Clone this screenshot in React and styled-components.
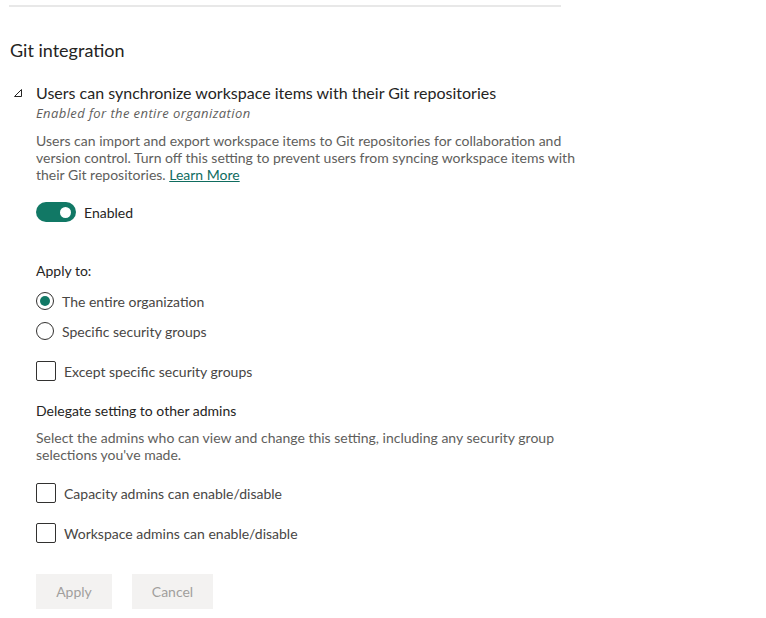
import React, { useState } from 'react';
import styled, { createGlobalStyle } from 'styled-components';

const GlobalStyle = createGlobalStyle`
  body {
    margin: 0;
    background: #fff;
    font-family: 'Segoe UI', Lato, 'Open Sans', sans-serif;
    color: #252423;
  }
`;

const Page = styled.div`
  padding: 5px 0 0 9px;
  width: 600px;
`;

const Divider = styled.div`
  width: 552px;
  height: 2px;
  background: #e8e8e8;
`;

const Heading = styled.h2`
  margin: 31px 0 0 1px;
  font-size: 18px;
  font-weight: 400;
  line-height: 24px;
  color: #252423;
`;

const Setting = styled.div`
  display: flex;
  margin-top: 20px;
`;

const Caret = styled.div`
  width: 27px;
  padding: 6px 0 0 4px;
  box-sizing: border-box;

  svg {
    display: block;
  }
`;

const Body = styled.div`
  flex: 1;
  display: flex;
  flex-direction: column;
  align-items: flex-start;
`;

const Title = styled.div`
  font-size: 16px;
  line-height: 22px;
`;

const Subtitle = styled.div`
  font-family: 'Open Sans', sans-serif;
  font-size: 13px;
  font-style: italic;
  letter-spacing: 0.4px;
  line-height: 18px;
  color: #605e5c;
`;

const Description = styled.p`
  margin: ${(p) => p.$top || 0}px 0 0;
  width: 560px;
  font-size: 14px;
  line-height: 17px;
  color: #605e5c;
`;

const LearnMore = styled.a`
  color: #0f6c5f;
  text-decoration: underline;
`;

const ToggleRow = styled.label`
  display: flex;
  align-items: center;
  gap: 8px;
  margin-top: 19px;
  font-size: 14px;
  cursor: pointer;
`;

const Track = styled.span`
  position: relative;
  width: 40px;
  height: 20px;
  border-radius: 10px;
  background: ${(p) => (p.$on ? '#117865' : '#fff')};
  border: ${(p) => (p.$on ? 'none' : '1px solid #605e5c')};
  box-sizing: border-box;
`;

const Knob = styled.span`
  position: absolute;
  top: 5px;
  left: ${(p) => (p.$on ? '24px' : '5px')};
  width: 11px;
  height: 11px;
  border-radius: 50%;
  background: ${(p) => (p.$on ? '#fff' : '#605e5c')};
`;

const Label = styled.div`
  margin-top: ${(p) => p.$top}px;
  font-size: 14px;
  line-height: 20px;
  color: #252423;
`;

const OptionRow = styled.label`
  display: flex;
  align-items: center;
  gap: 8px;
  height: 20px;
  margin-top: ${(p) => p.$top}px;
  font-size: 14px;
  color: #484644;
  cursor: pointer;
`;

const Radio = styled.span`
  display: flex;
  align-items: center;
  justify-content: center;
  width: 18px;
  height: 18px;
  border-radius: 50%;
  border: 1px solid #323130;
  box-sizing: border-box;
  &::after {
    content: '';
    width: 10px;
    height: 10px;
    border-radius: 50%;
    background: ${(p) => (p.$checked ? '#117865' : 'transparent')};
  }
`;

const Checkbox = styled.span`
  width: 20px;
  height: 20px;
  border: 1px solid #323130;
  border-radius: 2px;
  box-sizing: border-box;
  background: ${(p) => (p.$checked ? '#117865' : '#fff')};
`;

const Buttons = styled.div`
  display: flex;
  gap: 20px;
  margin-top: 31px;
`;

const Button = styled.button`
  width: ${(p) => p.$w}px;
  height: 35px;
  border: none;
  background: #f3f2f1;
  color: #a19f9d;
  font-family: inherit;
  font-size: 14px;
  padding: 0;
`;

function CaretIcon() {
  return (
    <svg width='10' height='10' viewBox='0 0 10 10'>
      <path d='M8.5 1.5 L8.5 8.5 L1.5 8.5 Z' fill='none' stroke='#252423' strokeWidth='1' />
    </svg>
  );
}

export default function App() {
  const [enabled, setEnabled] = useState(true);
  const [scope, setScope] = useState('org');
  const [checks, setChecks] = useState({ except: false, capacity: false, workspace: false });

  const flip = (key) => setChecks((c) => ({ ...c, [key]: !c[key] }));

  return (
    <Page>
      <GlobalStyle />
      <Divider />
      <Heading>Git integration</Heading>
      <Setting>
        <Caret>
          <CaretIcon />
        </Caret>
        <Body>
          <Title>Users can synchronize workspace items with their Git repositories</Title>
          <Subtitle>Enabled for the entire organization</Subtitle>
          <Description $top={10}>
            Users can import and export workspace items to Git repositories for collaboration and
            version control. Turn off this setting to prevent users from syncing workspace items with
            their Git repositories. <LearnMore href='#'>Learn More</LearnMore>
          </Description>

          <ToggleRow onClick={() => setEnabled(!enabled)}>
            <Track $on={enabled}>
              <Knob $on={enabled} />
            </Track>
            {enabled ? 'Enabled' : 'Disabled'}
          </ToggleRow>

          <Label $top={39}>Apply to:</Label>
          <OptionRow $top={10} onClick={() => setScope('org')}>
            <Radio $checked={scope === 'org'} />
            The entire organization
          </OptionRow>
          <OptionRow $top={10} onClick={() => setScope('groups')}>
            <Radio $checked={scope === 'groups'} />
            Specific security groups
          </OptionRow>
          <OptionRow $top={20} onClick={() => flip('except')}>
            <Checkbox $checked={checks.except} />
            Except specific security groups
          </OptionRow>

          <Label $top={20}>Delegate setting to other admins</Label>
          <Description $top={8}>
            Select the admins who can view and change this setting, including any security group
            selections you've made.
          </Description>
          <OptionRow $top={20} onClick={() => flip('capacity')}>
            <Checkbox $checked={checks.capacity} />
            Capacity admins can enable/disable
          </OptionRow>
          <OptionRow $top={20} onClick={() => flip('workspace')}>
            <Checkbox $checked={checks.workspace} />
            Workspace admins can enable/disable
          </OptionRow>

          <Buttons>
            <Button $w={76}>Apply</Button>
            <Button $w={81}>Cancel</Button>
          </Buttons>
        </Body>
      </Setting>
    </Page>
  );
}
